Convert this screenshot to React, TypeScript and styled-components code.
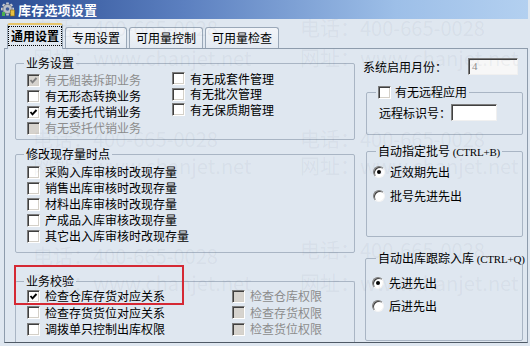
import React from 'react';
import styled, { createGlobalStyle, css } from 'styled-components';

const Global = createGlobalStyle`
  html, body { margin: 0; padding: 0; background: #dfe7f0; }
  body { font-family: "Noto Sans CJK SC", "Liberation Sans", sans-serif; }
`;

const Window = styled.div`
  position: relative;
  width: 530px;
  height: 346px;
  overflow: hidden;
  background: #dfe7f0;
  font-family: "Noto Sans CJK SC", "Liberation Sans", sans-serif;
  font-size: 12px;
  color: #000;
  display: flex;
  flex-direction: column;
`;

const TitleBar = styled.div`
  flex: none;
  height: 19px;
  margin-right: 2px;
  background: linear-gradient(90deg, #2a4c92 0%, #5c80c0 35%, #9dbfe8 75%, #b3d0f0 100%);
  display: flex;
  align-items: center;
  gap: 2px;
  padding-left: 1px;
  color: #fff;
  font-weight: bold;
  font-size: 13px;
  line-height: 19px;
  letter-spacing: 0.2px;
`;

const TabStrip = styled.div`
  flex: none;
  height: 29px;
  box-sizing: border-box;
  display: flex;
  align-items: flex-end;
  gap: 2px;
  padding-left: 7px;
`;

const Tab = styled.div<{ $active?: boolean }>`
  box-sizing: border-box;
  height: 21px;
  padding: 0 6px;
  display: flex;
  align-items: center;
  justify-content: center;
  border: 1px solid #9aa8b8;
  border-bottom: none;
  border-radius: 3px 3px 0 0;
  background: linear-gradient(#f2f5f9, #e3eaf2);
  white-space: nowrap;
  line-height: 14px;
  ${p => p.$active && css`
    position: relative;
    z-index: 1;
    height: 26px;
    margin-bottom: -1px;
    padding: 0 1px 2px;
    font-weight: bold;
    background: #dfe7f0;
    border-color: #9aa8b8;
    border-top: 2px solid #e6c46a;
  `}
`;

const Focus = styled.span`
  outline: 1px dotted #000;
  outline-offset: 0;
  padding: 2px 2px;
`;

const Panel = styled.div`
  flex: none;
  height: 295px;
  box-sizing: border-box;
  margin: 0 2px 0 4px;
  border: 1px solid #8e9cac;
  border-bottom-color: #4f5a66;
  display: flex;
  gap: 8px;
  padding: 7px 0 0 10px;
  overflow: hidden;
`;

const LeftCol = styled.div`
  width: 340px;
  flex: none;
  display: flex;
  flex-direction: column;
`;

const RightCol = styled.div`
  width: 160px;
  flex: none;
  display: flex;
  flex-direction: column;
`;

const Group = styled.fieldset<{ $pad: string; $gap: number; $inset?: number; $open?: boolean; $grow?: boolean }>`
  margin: ${p => p.$gap}px 0 ${p => (p.$grow && !p.$open ? 1 : 0)}px ${p => p.$inset ?? 0}px;
  min-width: 0;
  border: 1px solid #a9b5c4;
  border-radius: 2px;
  padding: ${p => p.$pad};
  ${p => p.$open && css`border-bottom: none; border-radius: 2px 2px 0 0;`}
  ${p => p.$grow && css`flex: 1;`}
`;

const Legend = styled.legend<{ $offset: number }>`
  padding: 0 2px;
  margin-left: ${p => p.$offset}px;
  line-height: 14px;
  height: 14px;
  font-size: 12px;
  white-space: nowrap;
`;

const LegendInner = styled.span`
  display: flex;
  align-items: center;
  gap: 4px;
`;

const Latin = styled.span`
  font-family: "Liberation Serif", serif;
  font-size: 11px;
  letter-spacing: -0.2px;
`;

const Columns = styled.div<{ $col: number }>`
  display: grid;
  grid-template-columns: ${p => p.$col}px 1fr;
`;

const Stack = styled.div<{ $row: number; $shift?: number }>`
  display: flex;
  flex-direction: column;
  margin-top: ${p => p.$shift ?? 0}px;
  & > * { height: ${p => p.$row}px; }
`;

const Item = styled.div<{ $disabled?: boolean; $gap?: number }>`
  display: flex;
  align-items: center;
  gap: ${p => p.$gap ?? 5}px;
  white-space: nowrap;
  line-height: 16px;
  color: ${p => (p.$disabled ? '#8c8c8c' : '#000')};
`;

const Box = styled.span<{ $disabled?: boolean }>`
  flex: none;
  width: 13px;
  height: 13px;
  box-sizing: border-box;
  border: 1px solid;
  border-color: #7d7d7d #ffffff #ffffff #7d7d7d;
  box-shadow: inset 1px 1px 0 #3f3f3f, inset -1px -1px 0 #d4d0c8;
  background: ${p => (p.$disabled ? '#d6d3ce' : '#ffffff')};
  display: inline-flex;
  align-items: center;
  justify-content: center;
`;

const Circle = styled.span<{ $on?: boolean }>`
  flex: none;
  width: 12px;
  height: 12px;
  box-sizing: border-box;
  border-radius: 50%;
  border: 1px solid;
  border-color: #7d7d7d #f4f4f4 #f4f4f4 #7d7d7d;
  box-shadow: inset 1px 1px 0 #404040;
  background: #fff;
  display: inline-flex;
  align-items: center;
  justify-content: center;
  ${p => p.$on && css`
    &::after {
      content: '';
      width: 4px;
      height: 4px;
      border-radius: 50%;
      background: #000;
    }
  `}
`;

const FieldRow = styled.div<{ $h: number }>`
  height: ${p => p.$h}px;
  display: flex;
  align-items: center;
  white-space: nowrap;
`;

const TextField = styled.div<{ $w: number; $muted?: boolean; $push?: boolean }>`
  box-sizing: border-box;
  width: ${p => p.$w}px;
  height: 17px;
  border: 1px solid;
  border-color: #7d7d7d #f0f0f0 #f0f0f0 #7d7d7d;
  box-shadow: inset 1px 1px 0 #404040;
  background: #fff;
  color: #8c8c8c;
  font-family: "Liberation Serif", serif;
  font-size: 11px;
  line-height: 15px;
  padding-left: 3px;
  ${p => p.$muted && css`background: #f7f7f7;`}
  ${p => p.$push && css`margin: 0 5px 0 auto;`}
`;

const Highlight = styled.div`
  position: absolute;
  left: 14px;
  top: 265px;
  width: 170px;
  height: 40px;
  box-sizing: border-box;
  border: 2px solid #d52934;
  pointer-events: none;
`;

const Watermark = styled.div`
  position: absolute;
  font-family: "Noto Sans CJK SC", "DejaVu Sans", sans-serif;
  font-size: 20px;
  line-height: 24px;
  color: rgba(95, 110, 130, 0.075);
  white-space: nowrap;
  pointer-events: none;
`;

const Check = ({ checked, disabled }: { checked?: boolean; disabled?: boolean }) => (
  <Box $disabled={disabled}>
    {checked && (
      <svg width="9" height="9" viewBox="0 0 9 9">
        <polyline
          points="1.5,4 3.5,6.3 7.5,2"
          fill="none"
          stroke={disabled ? '#808080' : '#000'}
          strokeWidth="1.9"
        />
      </svg>
    )}
  </Box>
);

const CheckItem = ({ label, checked, disabled }: { label: string; checked?: boolean; disabled?: boolean }) => (
  <Item $disabled={disabled}>
    <Check checked={checked} disabled={disabled} />
    <span>{label}</span>
  </Item>
);

const RadioItem = ({ label, on }: { label: string; on?: boolean }) => (
  <Item $gap={5}>
    <Circle $on={on} />
    <span>{label}</span>
  </Item>
);

const GearIcon = () => (
  <svg width="15" height="15" viewBox="0 0 15 15">
    <g transform="translate(6.5 7)">
      {[0, 45, 90, 135, 180, 225, 270, 315].map(a => (
        <rect key={a} x="-1.3" y="-6.5" width="2.6" height="3" fill="#c9cdd4" transform={`rotate(${a})`} />
      ))}
      <circle r="4.6" fill="#b9bec7" stroke="#6d7480" strokeWidth="0.8" />
      <circle r="1.8" fill="#3d5a9a" />
    </g>
    <rect x="9.5" y="8" width="4" height="6" fill="#e8c040" stroke="#8a6a10" strokeWidth="0.6" />
    <rect x="1" y="10" width="3" height="4" fill="#4caf50" />
  </svg>
);

const marks = [
  { x: 33, y: 16, t: '电话：400-665-0028' },
  { x: 300, y: 16, t: '电话：400-665-0028' },
  { x: 33, y: 46, t: '网址：www.chanjet.net' },
  { x: 300, y: 46, t: '网址：www.chanjet.net' },
  { x: 33, y: 127, t: '电话：400-665-0028' },
  { x: 300, y: 127, t: '电话：400-665-0028' },
  { x: 33, y: 154, t: '网址：www.chanjet.net' },
  { x: 300, y: 154, t: '网址：www.chanjet.net' },
  { x: 33, y: 244, t: '电话：400-665-0028' },
  { x: 300, y: 238, t: '电话：400-665-0028' },
  { x: 33, y: 271, t: '网址：www.chanjet.net' },
  { x: 300, y: 271, t: '网址：www.chanjet.net' },
];

export default function App() {
  return (
    <>
      <Global />
      <Window>
        <TitleBar>
          <GearIcon />
          <span>库存选项设置</span>
        </TitleBar>
        <TabStrip>
          <Tab $active>
            <Focus>通用设置</Focus>
          </Tab>
          <Tab>专用设置</Tab>
          <Tab>可用量控制</Tab>
          <Tab>可用量检查</Tab>
        </TabStrip>
        <Panel>
          <LeftCol>
            <Group $gap={0} $pad="2px 0 3px 11px">
              <Legend $offset={-3}>业务设置</Legend>
              <Columns $col={145}>
                <Stack $row={16}>
                  <CheckItem label="有无組装拆卸业务" checked disabled />
                  <CheckItem label="有无形态转换业务" />
                  <CheckItem label="有无委托代销业务" checked />
                  <CheckItem label="有无受托代销业务" disabled />
                </Stack>
                <Stack $row={15.5} $shift={-1}>
                  <CheckItem label="有无成套件管理" />
                  <CheckItem label="有无批次管理" />
                  <CheckItem label="有无保质期管理" />
                </Stack>
              </Columns>
            </Group>
            <Group $gap={7} $pad="3px 0 8px 11px">
              <Legend $offset={-3}>修改现存量时点</Legend>
              <Stack $row={16}>
                <CheckItem label="采购入库审核时改现存量" />
                <CheckItem label="销售出库审核时改现存量" />
                <CheckItem label="材料出库审核时改现存量" />
                <CheckItem label="产成品入库审核改现存量" />
                <CheckItem label="其它出入库审核时改现存量" />
              </Stack>
            </Group>
            <Group $gap={21} $pad="0 0 0 11px" $open $grow>
              <Legend $offset={-3}>业务校验</Legend>
              <Columns $col={205}>
                <Stack $row={16.5}>
                  <CheckItem label="检查仓库存货对应关系" checked />
                  <CheckItem label="检查存货货位对应关系" />
                  <CheckItem label="调拨单只控制出库权限" />
                </Stack>
                <Stack $row={16.5}>
                  <CheckItem label="检查仓库权限" disabled />
                  <CheckItem label="检查存货权限" disabled />
                  <CheckItem label="检查货位权限" disabled />
                </Stack>
              </Columns>
            </Group>
          </LeftCol>
          <RightCol>
            <FieldRow $h={21}>
              <span>系统启用月份：</span>
              <TextField $w={50} $muted $push>4</TextField>
            </FieldRow>
            <Group $gap={8} $inset={3} $pad="2px 0 10px 12px">
              <Legend $offset={-3}>
                <LegendInner>
                  <Check />
                  <span>有无远程应用</span>
                </LegendInner>
              </Legend>
              <FieldRow $h={23}>
                <span>远程标识号：</span>
                <TextField $w={46} />
              </FieldRow>
            </Group>
            <Group $gap={9} $inset={3} $pad="2px 0 28px 6px">
              <Legend $offset={3}>
                自动指定批号 <Latin>(CTRL+B)</Latin>
              </Legend>
              <Stack $row={24}>
                <RadioItem label="近效期先出" on />
                <RadioItem label="批号先进先出" />
              </Stack>
            </Group>
            <Group $gap={14} $inset={2} $pad="6px 0 0 6px" $grow>
              <Legend $offset={4}>
                自动出库跟踪入库 <Latin>(CTRL+Q)</Latin>
              </Legend>
              <Stack $row={23}>
                <RadioItem label="先进先出" on />
                <RadioItem label="后进先出" />
              </Stack>
            </Group>
          </RightCol>
        </Panel>
        {marks.map((m, i) => (
          <Watermark key={i} style={{ left: m.x, top: m.y }}>
            {m.t}
          </Watermark>
        ))}
        <Highlight />
      </Window>
    </>
  );
}
